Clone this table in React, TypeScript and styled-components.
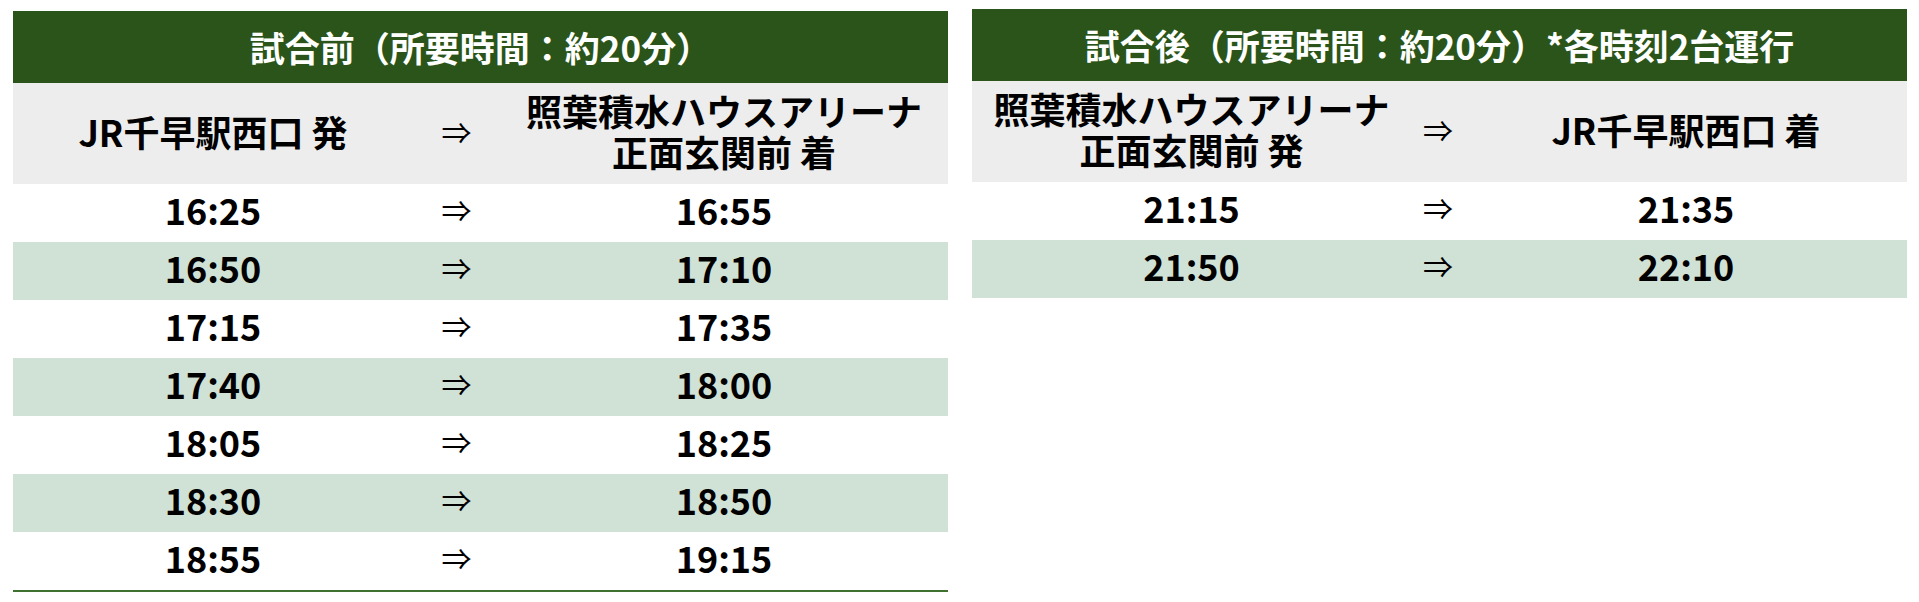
import styled, { createGlobalStyle } from "styled-components";

const GlobalStyle = createGlobalStyle`
	html, body {
		margin: 0;
		padding: 0;
		background: #ffffff;
	}
	body {
		font-family: "Noto Sans CJK JP", "Noto Sans", sans-serif;
		color: #000000;
	}
`;

interface Timetable {
	title: string;
	from: string[];
	to: string[];
	rows: [string, string][];
	columns: string;
	offset: number;
	bottomLine?: boolean;
}

const tables: Timetable[] = [
	{
		title: "試合前（所要時間：約20分）",
		from: ["JR千早駅西口 発"],
		to: ["照葉積水ハウスアリーナ", "正面玄関前 着"],
		rows: [
			["16:25", "16:55"],
			["16:50", "17:10"],
			["17:15", "17:35"],
			["17:40", "18:00"],
			["18:05", "18:25"],
			["18:30", "18:50"],
			["18:55", "19:15"],
		],
		columns: "400px 87px 1fr",
		offset: 2,
		bottomLine: true,
	},
	{
		title: "試合後（所要時間：約20分）*各時刻2台運行",
		from: ["照葉積水ハウスアリーナ", "正面玄関前 発"],
		to: ["JR千早駅西口 着"],
		rows: [
			["21:15", "21:35"],
			["21:50", "22:10"],
		],
		columns: "439px 54px 1fr",
		offset: 0,
	},
];

export default function App() {
	return (
		<>
			<GlobalStyle />
			<Page>
				{tables.map((t) => (
					<Table key={t.title} $offset={t.offset} $bottomLine={t.bottomLine}>
						<Title>{t.title}</Title>
						<HeadRow $columns={t.columns}>
							<Cell>
								{t.from.map((l) => (
									<Line key={l}>{l}</Line>
								))}
							</Cell>
							<Arrow>⇒</Arrow>
							<Cell>
								{t.to.map((l) => (
									<Line key={l}>{l}</Line>
								))}
							</Cell>
						</HeadRow>
						{t.rows.map(([dep, arr], i) => (
							<Row key={dep} $columns={t.columns} $striped={i % 2 === 1}>
								<Cell>{dep}</Cell>
								<Arrow>⇒</Arrow>
								<Cell>{arr}</Cell>
							</Row>
						))}
					</Table>
				))}
			</Page>
		</>
	);
}

const Page = styled.div`
	display: flex;
	align-items: flex-start;
	gap: 24px;
	padding: 9px 12px 0 13px;
	width: 1919px;
	box-sizing: border-box;
`;

const Table = styled.div<{ $offset: number; $bottomLine?: boolean }>`
	flex: 0 0 935px;
	margin-top: ${({ $offset }) => $offset}px;
	border-bottom: ${({ $bottomLine }) => ($bottomLine ? "2px solid #3f7230" : "none")};
`;

const Title = styled.div`
	background: #2a5419;
	color: #ffffff;
	font-size: 35px;
	font-weight: 700;
	line-height: 43px;
	text-align: center;
	padding: 14px 0 15px;
`;

const HeadRow = styled.div<{ $columns: string }>`
	display: grid;
	grid-template-columns: ${({ $columns }) => $columns};
	align-items: center;
	background: #ededed;
	height: 101px;
	box-sizing: border-box;
	padding-bottom: 5px;
	font-size: 36px;
	font-weight: 700;
	line-height: 41px;
`;

const Row = styled.div<{ $columns: string; $striped: boolean }>`
	display: grid;
	grid-template-columns: ${({ $columns }) => $columns};
	align-items: center;
	height: 58px;
	box-sizing: border-box;
	padding-bottom: 7px;
	background: ${({ $striped }) => ($striped ? "#d0e2d5" : "#ffffff")};
	font-size: 36px;
	font-weight: 700;
	line-height: 43px;
`;

const Cell = styled.div`
	display: flex;
	flex-direction: column;
	align-items: center;
	text-align: center;
	white-space: nowrap;
`;

const Line = styled.span`
	display: block;
`;

const Arrow = styled.div`
	text-align: center;
	font-weight: 400;
	font-size: 30px;
`;
